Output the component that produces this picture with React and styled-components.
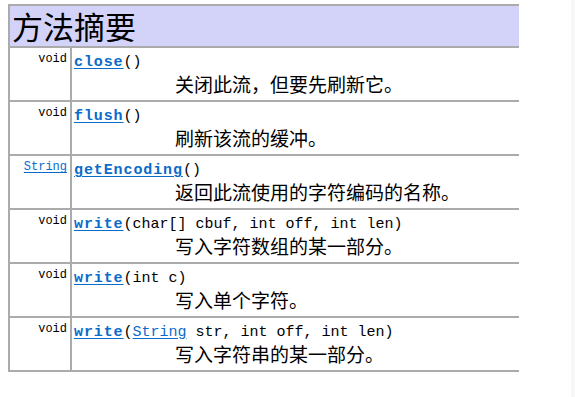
import React from 'react';
import styled, { createGlobalStyle } from 'styled-components';

const GlobalStyle = createGlobalStyle`
  html, body {
    margin: 0;
    padding: 0;
    background: #ffffff;
  }
  body {
    font-family: "Noto Sans CJK SC", "Noto Sans", sans-serif;
    color: #000000;
  }
`;

const Page = styled.div`
  display: flex;
  justify-content: space-between;
  min-height: 397px;
`;

const Content = styled.div`
  padding: 4px 0 0 8px;
`;

const EdgeStrip = styled.div`
  width: 4px;
  background: #f6f8f8;
`;

const Summary = styled.div`
  width: 509px;
  border-top: 2px solid #ababab;
  border-left: 2px solid #ababab;
`;

const HeaderCell = styled.div`
  height: 40px;
  display: flex;
  align-items: center;
  padding-left: 2px;
  background: #d3d3fa;
  border-bottom: 2px solid #ababab;
  font-size: 31px;
  line-height: 40px;
`;

const Row = styled.div`
  display: grid;
  grid-template-columns: 62px 1fr;
  height: 52px;
  border-bottom: 2px solid #ababab;
`;

const TypeCell = styled.div`
  border-right: 2px solid #ababab;
  text-align: right;
  padding: 5px 3px 0 0;
  font-family: "Liberation Mono", monospace;
  font-size: 12px;
  line-height: 13px;
`;

const MethodCell = styled.div`
  padding: 5px 0 0 2px;
`;

const Signature = styled.div`
  font-family: "Liberation Mono", monospace;
  font-size: 15px;
  line-height: 19px;
  white-space: pre;
`;

const Link = styled.a`
  color: #0a6bc9;
  font-weight: ${(p) => (p.$bold ? 700 : 400)};
  letter-spacing: ${(p) => (p.$bold ? '0.9px' : '0')};
  text-decoration: underline;
  text-underline-offset: 2px;
`;

const Description = styled.div`
  padding: 1px 0 0 101px;
  font-size: 19px;
  line-height: 22px;
`;

const methods = [
  { type: 'void', name: 'close', args: ['()'], desc: '关闭此流，但要先刷新它。' },
  { type: 'void', name: 'flush', args: ['()'], desc: '刷新该流的缓冲。' },
  { type: 'String', name: 'getEncoding', args: ['()'], desc: '返回此流使用的字符编码的名称。' },
  {
    type: 'void',
    name: 'write',
    args: ['(char[] cbuf, int off, int len)'],
    desc: '写入字符数组的某一部分。',
  },
  { type: 'void', name: 'write', args: ['(int c)'], desc: '写入单个字符。' },
  {
    type: 'void',
    name: 'write',
    args: ['(', { link: 'String' }, ' str, int off, int len)'],
    desc: '写入字符串的某一部分。',
  },
];

const TypeLabel = ({ type }) =>
  type === 'void' ? type : <Link href="#">{type}</Link>;

const App = () => {
  return (
    <>
      <GlobalStyle />
      <Page>
        <Content>
          <Summary>
            <HeaderCell>方法摘要</HeaderCell>
            {methods.map((m, i) => (
              <Row key={i}>
                <TypeCell>
                  <TypeLabel type={m.type} />
                </TypeCell>
                <MethodCell>
                  <Signature>
                    <Link href="#" $bold>
                      {m.name}
                    </Link>
                    {m.args.map((a, j) =>
                      typeof a === 'string' ? (
                        a
                      ) : (
                        <Link key={j} href="#">
                          {a.link}
                        </Link>
                      )
                    )}
                  </Signature>
                  <Description>{m.desc}</Description>
                </MethodCell>
              </Row>
            ))}
          </Summary>
        </Content>
        <EdgeStrip />
      </Page>
    </>
  );
};

export default App;
